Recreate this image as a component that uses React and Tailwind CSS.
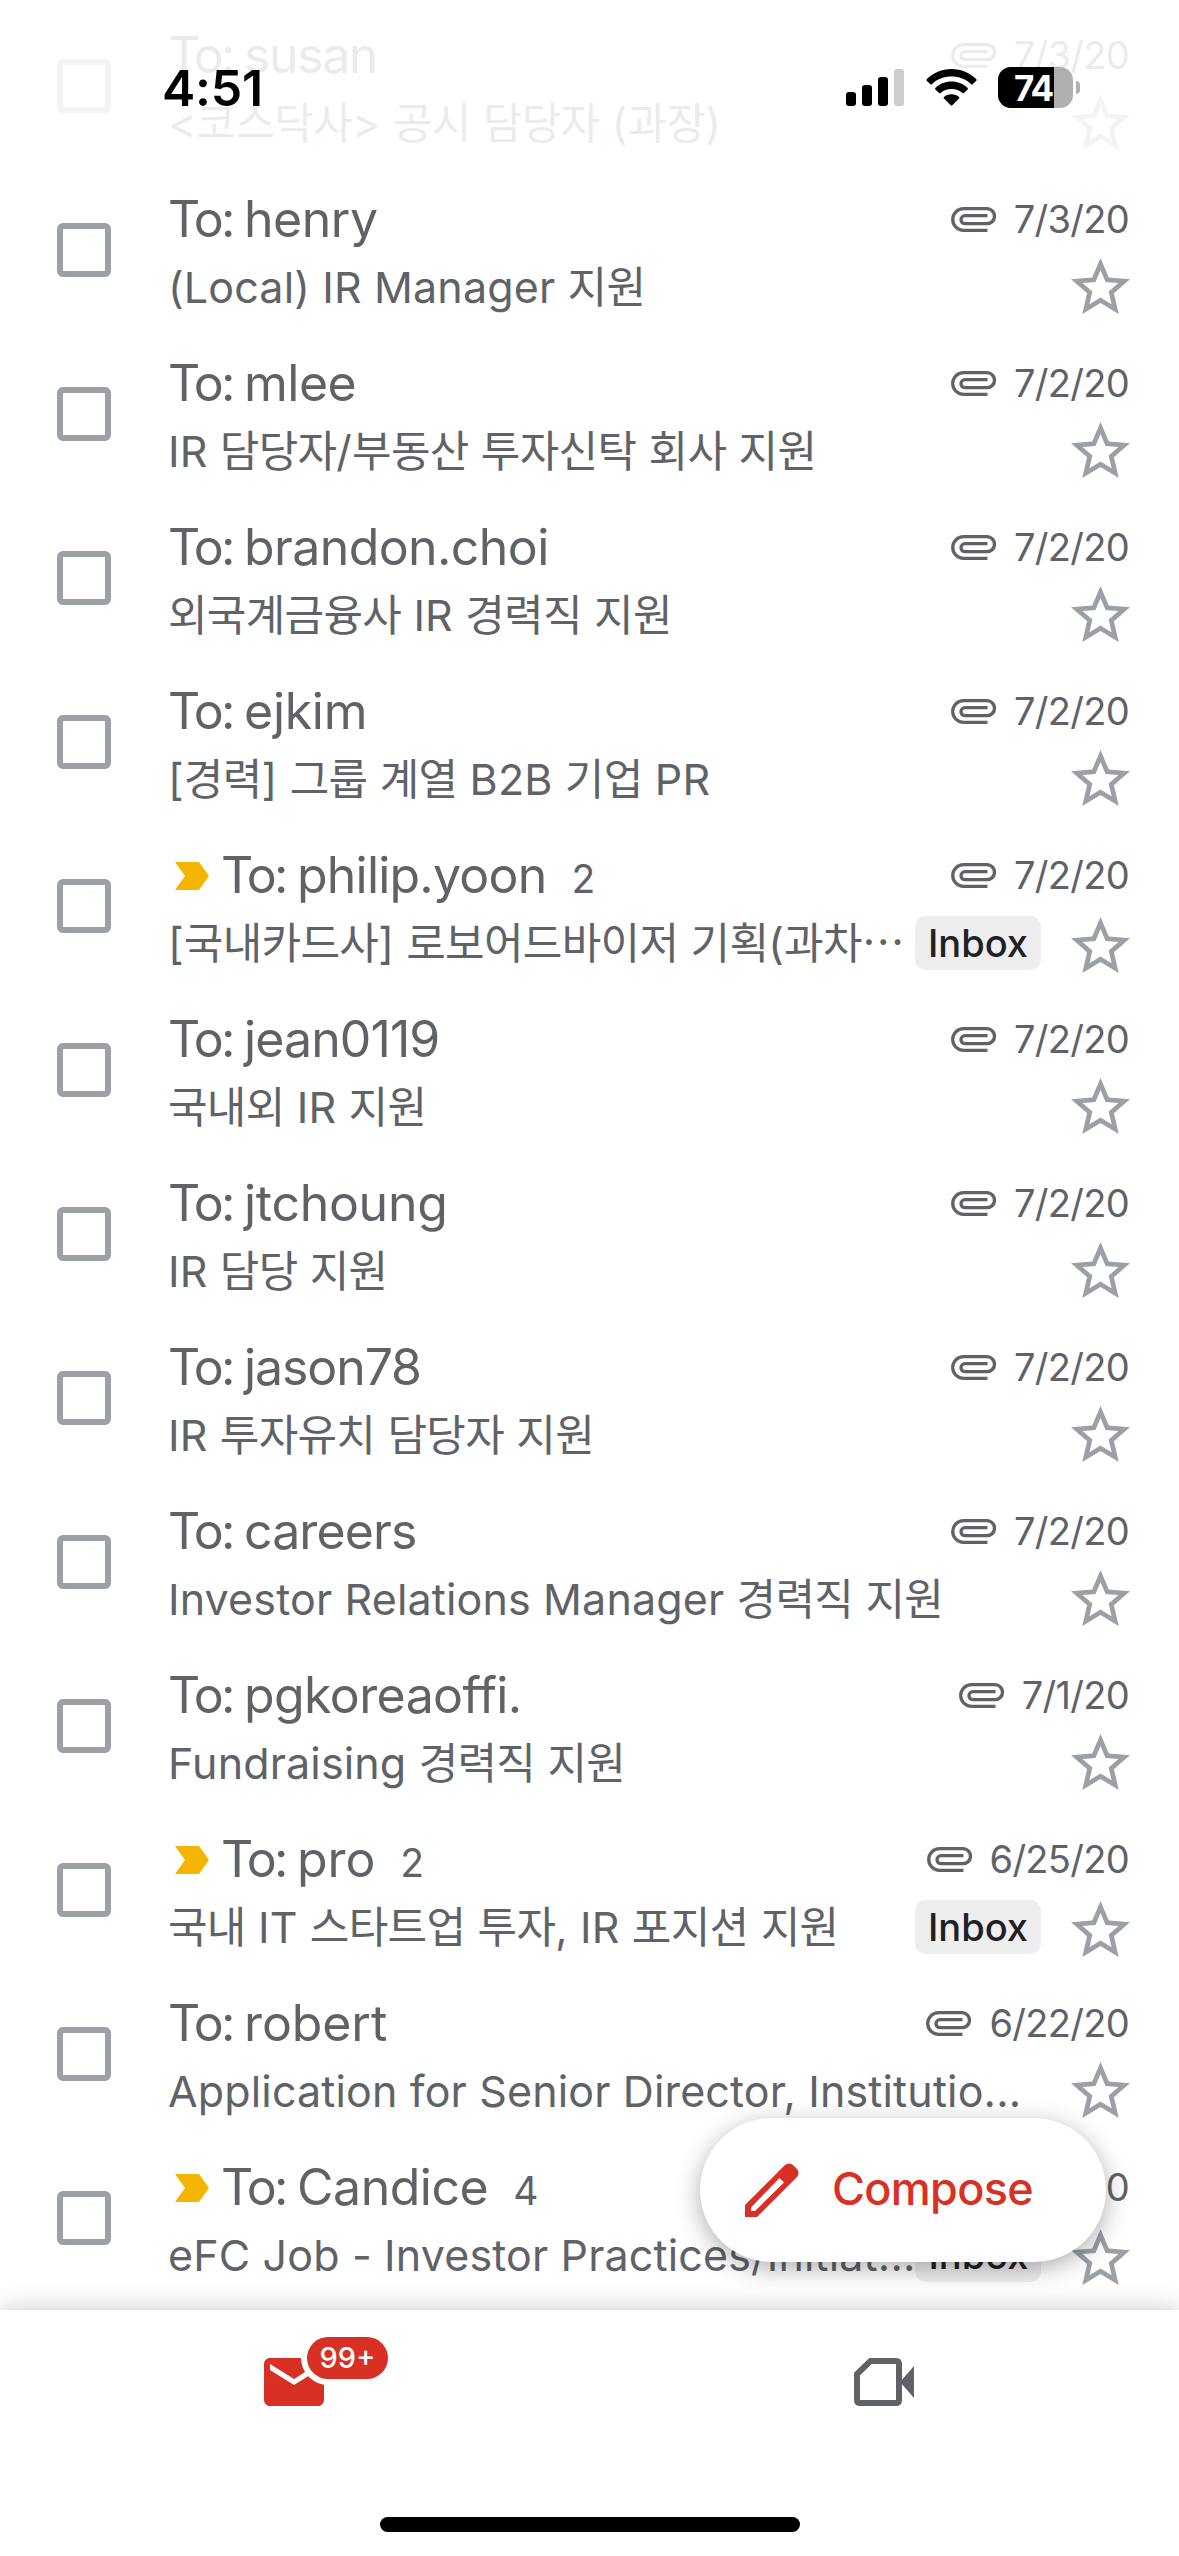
import React from 'react';
import clsx from 'clsx';

const threads = [
  { to: 'susan', tracking: 'tracking-[-1.4px]', subject: '<코스닥사> 공시 담당자 (과장)', date: '7/3/20' },
  { to: 'henry', tracking: 'tracking-[-0.5px]', subject: '(Local) IR Manager 지원', date: '7/3/20' },
  { to: 'mlee', tracking: 'tracking-[-0.5px]', subject: 'IR 담당자/부동산 투자신탁 회사 지원', date: '7/2/20' },
  { to: 'brandon.choi', tracking: 'tracking-[-0.6px]', subject: '외국계금융사 IR 경력직 지원', date: '7/2/20' },
  { to: 'ejkim', tracking: 'tracking-[-0.3px]', subject: '[경력] 그룹 계열 B2B 기업 PR', date: '7/2/20' },
  { to: 'philip.yoon', tracking: 'tracking-[-0.8px]', subject: '[국내카드사] 로보어드바이저 기획(과차⋯', date: '7/2/20', count: 2, important: true, inbox: true },
  { to: 'jean0119', tracking: 'tracking-[-0.9px]', subject: '국내외 IR 지원', date: '7/2/20' },
  { to: 'jtchoung', tracking: 'tracking-[-0.3px]', subject: 'IR 담당 지원', date: '7/2/20' },
  { to: 'jason78', tracking: 'tracking-[-1.1px]', subject: 'IR 투자유치 담당자 지원', date: '7/2/20' },
  { to: 'careers', tracking: 'tracking-[-0.9px]', subject: 'Investor Relations Manager 경력직 지원', date: '7/2/20' },
  { to: 'pgkoreaoffi.', tracking: 'tracking-[-0.6px]', subject: 'Fundraising 경력직 지원', date: '7/1/20' },
  { to: 'pro', tracking: 'tracking-[-0.1px]', subject: '국내 IT 스타트업 투자, IR 포지션 지원', date: '6/25/20', count: 2, important: true, inbox: true },
  { to: 'robert', tracking: 'tracking-[-0.1px]', subject: 'Application for Senior Director, Institutio...', date: '6/22/20' },
  { to: 'Candice', tracking: 'tracking-[-0.5px]', subject: 'eFC Job - Investor Practices/Initiat...', date: '6/21/20', count: 4, important: true, inbox: true },
];

const PaperclipIcon = () => (
  <svg className="w-[45px] h-[25px] shrink-0" viewBox="0 0 45 25" fill="none" stroke="#5f6368" strokeWidth="3.3">
    <path d="M36.5 23.3H12.5A10.800 10.800 0 0 1 12.5 1.700H36A7.5 7.5 0 0 1 36 16.700H14A4 4 0 0 1 14 8.700H36.5" />
  </svg>
);

const StarIcon = ({ className }) => (
  <svg className={clsx('w-[59px] h-[56px] shrink-0', className)} viewBox="2 2 20 19" fill="#9aa0a6">
    <path d="M22 9.24l-7.19-.62L12 2 9.19 8.63 2 9.24l5.46 4.73L5.82 21 12 17.27 18.18 21l-1.63-7.03L22 9.24zM12 15.4l-3.76 2.27 1-4.28-3.32-2.88 4.38-.38L12 6.1l1.71 4.04 4.38.38-3.32 2.88 1 4.28L12 15.4z" />
  </svg>
);

const ImportantIcon = () => (
  <svg className="w-[34px] h-[28px] ml-[7px] mr-[12px] mt-[2px] shrink-0" viewBox="0 0 34 28" fill="#f5b400">
    <path d="M0 0H24L34 14L24 28H0L10 14Z" />
  </svg>
);

// Hangul runs are set a little tighter than the Latin ones
const Subject = ({ text }) => (
  <span className="whitespace-nowrap text-[43px] leading-[56px] tracking-[0.15px]">
    {text.split(/([가-힣]+)/).map((part, i) =>
      i % 2 ? <span key={i} className="tracking-[-0.7px]">{part}</span> : part
    )}
  </span>
);

const ThreadRow = ({ thread }) => (
  <div className="flex h-[164px] shrink-0 pl-[57px] pr-[49px] text-[#5f6368]">
    <div className="mt-[55px] size-[54px] shrink-0 rounded-[6px] border-6 border-[#9aa0a6]" />
    <div className="ml-[57px] flex min-w-0 flex-1 flex-col pt-[21px]">
      <div className="flex h-[60px] items-center">
        {thread.important && <ImportantIcon />}
        <span className={clsx('whitespace-nowrap text-[50px] leading-[60px]', thread.tracking)}>
          <span className="tracking-[-2.7px]">To: </span>
          {thread.to}
        </span>
        {thread.count && <span className="ml-[25px] mt-[8px] text-[39px] leading-[52px]">{thread.count}</span>}
        <div className="ml-auto mr-px flex items-center gap-[18px]">
          <PaperclipIcon />
          <span className="text-[38px] leading-[60px] tracking-[-0.7px]">{thread.date}</span>
        </div>
      </div>
      <div className="mt-[10px] flex h-[56px] items-start">
        <Subject text={thread.subject} />
        <div className="ml-auto flex">
          {thread.inbox && (
            <span className="mr-[30px] mt-px h-[54px] w-[126px] rounded-[11px] bg-[#eeeeee] text-center text-[38px] font-medium leading-[54px] text-[#202124]">
              Inbox
            </span>
          )}
          <StarIcon className={thread.inbox ? 'mt-[2px]' : '-mt-px'} />
        </div>
      </div>
    </div>
  </div>
);

const StatusBar = () => (
  <div className="absolute inset-x-0 top-0 flex h-[177px] items-start bg-white/[0.875] pl-[162px] pt-[58px] text-black">
    <span className="w-[683px] text-[50px] font-semibold leading-[61px] tracking-[-0.2px]">4:51</span>
    <svg className="mt-[11px] w-[59px] h-[37px]" viewBox="0 0 59 37">
      <rect x="1" y="23" width="10" height="14" rx="3" />
      <rect x="17" y="16" width="10" height="21" rx="3" />
      <rect x="33" y="8" width="10" height="29" rx="3" />
      <rect x="49" y="0" width="10" height="37" rx="3" fill="#cccccc" />
    </svg>
    <svg className="ml-[22px] mt-[11px] w-[51px] h-[37px]" viewBox="0 0 51 37">
      <path d="M25.5 0C35.200 0 44 3.800 50.300 10.200Q51 11 50.300 11.700L46.600 15.300Q45.900 16 45.200 15.300C40 10.200 33 7.600 25.500 7.600S11 10.200 5.800 15.300Q5.100 16 4.400 15.300L.7 11.700Q0 11 .7 10.200C7 3.800 15.800 0 25.500 0Z" />
      <path d="M25.500 12.600C31.800 12.600 37.500 15 41.600 18.900Q42.400 19.700 41.600 20.400L37.900 24Q37.200 24.700 36.400 24C33.600 21.500 29.800 20 25.500 20S17.400 21.500 14.600 24Q13.800 24.700 13.100 24L9.400 20.400Q8.600 19.700 9.400 18.900C13.500 15 19.200 12.600 25.500 12.600Z" />
      <path d="M25.500 25.200C28.500 25.200 31.100 26.200 33 27.900Q33.800 28.700 33 29.500L26.300 36.300Q25.500 37.100 24.700 36.300L18 29.500Q17.200 28.700 18 27.900C19.900 26.200 22.500 25.200 25.500 25.200Z" />
    </svg>
    <div className="ml-[21px] mt-[9px] flex h-[41px] w-[75px] overflow-hidden rounded-[13px] bg-[#b0b0b0]">
      <span className="w-[56px] bg-black pl-[16px] text-[35px] font-bold leading-[42px] tracking-[-1.8px] text-white">74</span>
    </div>
    <div className="ml-[3px] mt-[23px] h-[13px] w-[4px] rounded-r-full bg-[#b0b0b0]" />
  </div>
);

const ComposeButton = () => (
  <button className="absolute left-[700px] top-[2118px] flex h-[144px] w-[406px] items-center rounded-full bg-white pl-[45px] text-[#d93025] shadow-[0_6px_24px_rgba(0,0,0,0.32)]">
    <svg className="size-[54px]" viewBox="0 0 54 54" fill="currentColor" fillRule="evenodd">
      <path d="M0 54V42L40 2A6 6 0 0 1 48 2L52 6A6 6 0 0 1 52 14L12 54ZM6 48H10L39 19.500L34.500 15L6 44.500Z" />
    </svg>
    <span className="-mt-[3px] ml-[33px] text-[45px] font-medium leading-[60px] tracking-[-0.7px]">Compose</span>
  </button>
);

const BottomNav = () => (
  <nav className="relative h-[246px] bg-white shadow-[0_0_24px_rgba(0,0,0,0.22)]">
    <div className="flex pt-[48px]">
      <div className="relative ml-[264px] h-[48px] w-[60px]">
        <svg className="size-full" viewBox="2 4 20 16" fill="#d93025">
          <path d="M20 4H4c-1.100 0-1.990.9-1.990 2L2 18c0 1.100.9 2 2 2h16c1.100 0 2-.9 2-2V6c0-1.100-.9-2-2-2zm0 4l-8 5-8-5V6l8 5 8-5v2z" />
        </svg>
        <span className="absolute left-[43px] top-[-21px] h-[42px] w-[81px] rounded-full bg-[#d93025] text-center text-[29px] font-medium leading-[42px] text-white ring-6 ring-white">
          99+
        </span>
      </div>
      <svg className="ml-[530px] w-[60px] h-[48px]" viewBox="0 0 60 48">
        <path d="M16.500 3H42Q45 3 45 6V42Q45 45 42 45H6Q3 45 3 42V16Z" fill="none" stroke="#5f6368" strokeWidth="6" />
        <path d="M46 24L60 8V40Z" fill="#5f6368" />
      </svg>
    </div>
    <div className="mx-auto mt-[111px] h-[15px] w-[420px] rounded-full bg-black" />
  </nav>
);

const App = () => {
  return (
    <div
      lang="ko"
      className="relative flex h-[2556px] w-[1179px] flex-col overflow-hidden bg-white font-['Inter','Noto_Sans_CJK_KR',sans-serif]"
    >
      <main className="flex h-[2310px] flex-col overflow-hidden pt-[4px]">
        {threads.map((thread) => (
          <ThreadRow key={thread.to} thread={thread} />
        ))}
      </main>
      <StatusBar />
      <ComposeButton />
      <BottomNav />
    </div>
  );
};

export default App;
